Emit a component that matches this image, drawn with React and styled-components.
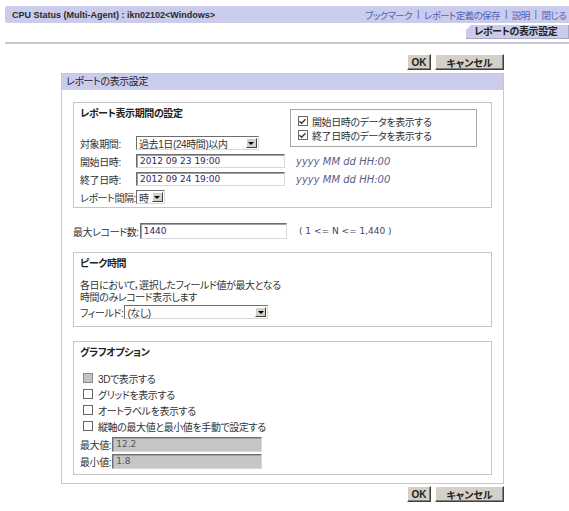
import React from 'react'
import styled, { createGlobalStyle } from 'styled-components'

const GlobalStyle = createGlobalStyle`
  html, body { margin: 0; padding: 0; background: #fff; }
  body {
    font-family: "Liberation Sans", "Noto Sans CJK JP", sans-serif;
    font-size: 10px;
    color: #333;
    letter-spacing: -0.4px;
    font-feature-settings: "palt";
  }
`

const lavender = '#cbcbec'

const Page = styled.div`
  width: 569px;
  padding-top: 6px;
`

const TopBar = styled.div`
  margin-left: 5px;
  height: 17px;
  background: ${lavender};
  border-radius: 2px 0 0 2px;
  display: flex;
  align-items: center;
  justify-content: space-between;
  padding: 0 3px 0 7px;
`
const AppTitle = styled.div`
  font-weight: bold;
  font-size: 9px;
  letter-spacing: 0;
  color: #2a2a2a;
`
const Links = styled.div`
  display: flex;
  gap: 5px;
  font-size: 9.5px;
  letter-spacing: -0.6px;
  color: #4a62b8;
`

const TabRow = styled.div`
  display: flex;
  justify-content: flex-end;
  margin: 2px 0 0 5px;
  padding-bottom: 3px;
  border-bottom: 2px solid #c6c6d6;
`
const Tab = styled.div`
  width: 95px;
  height: 14px;
  padding-left: 8px;
  background: ${lavender};
  clip-path: polygon(5px 0, 100% 0, 100% 100%, 0 100%, 0 5px);
  font-weight: bold;
  color: #222;
  line-height: 14px;
  box-shadow: inset -1px -1px 0 #a8a8c8;
`

const ButtonRow = styled.div`
  display: flex;
  justify-content: flex-end;
  gap: 4px;
  padding-right: 65px;
  margin-top: ${p => p.$top}px;
`
const Btn = styled.button`
  height: 16px;
  width: ${p => p.$w}px;
  padding: 0;
  background: #d4d0c8;
  border: 1px solid;
  border-color: #fff #404040 #404040 #fff;
  box-shadow: inset -1px -1px 0 #808080;
  font-family: "Liberation Sans", "Noto Sans CJK JP", sans-serif;
  font-size: 10px;
  font-weight: bold;
  color: #222;
  font-feature-settings: "palt";
`

const Panel = styled.div`
  margin: 3px 0 0 61px;
  width: 443px;
  box-sizing: border-box;
  border: 1px solid #c8c8c8;
`
const PanelHead = styled.div`
  height: 16px;
  line-height: 16px;
  background: ${lavender};
  padding-left: 4px;
  color: #222;
`
const PanelBody = styled.div`
  padding: 12px 11px 8px;
`

const Section = styled.div`
  border: 1px solid #c6c6c6;
  padding: 5px 6px ${p => p.$pb}px;
  margin-top: ${p => p.$mt || 0}px;
`
const SectionTitle = styled.div`
  font-weight: bold;
  line-height: 12px;
  color: #222;
  grid-column: ${p => p.$span || 'auto'};
`

const PeriodGrid = styled.div`
  display: grid;
  grid-template-columns: max-content 151px 1fr;
  grid-template-rows: 28px 18px 18px 18px 14px;
`
const Cell = styled.div`
  height: 14px;
  display: flex;
  align-items: center;
  white-space: nowrap;
`
const CheckBoxPanel = styled.div`
  grid-column: 3;
  grid-row: 1 / span 2;
  margin: 1px 8px 0 3px;
  height: 38px;
  box-sizing: border-box;
  border: 1px solid #a8a8a8;
  padding: 4px 0 0 7px;
  display: flex;
  flex-direction: column;
`
const Hint = styled(Cell)`
  padding-left: 9px;
  font-family: "DejaVu Sans", sans-serif;
  font-style: italic;
  font-size: 10px;
  letter-spacing: 0;
  color: #5c5c86;
`

const TextInput = styled.input`
  width: ${p => (p.$w ? `${p.$w}px` : 'auto')};
  flex: ${p => (p.$w ? 'none' : '1')};
  min-width: 0;
  height: ${p => p.$h || 14}px;
  box-sizing: border-box;
  margin: 0;
  padding: 0 3px;
  border: 1px solid;
  border-color: #6e6e6e #d8d8d8 #d8d8d8 #6e6e6e;
  box-shadow: inset 1px 1px 0 #a0a0a0;
  background: ${p => (p.$disabled ? '#c6c6c6' : '#fff')};
  color: ${p => (p.$disabled ? '#555' : '#2c2a5e')};
  font-family: "DejaVu Sans", sans-serif;
  font-size: 9px;
  letter-spacing: 0;
  outline: none;
`

const SelectBox = styled.div`
  width: ${p => p.$w}px;
  height: 14px;
  box-sizing: border-box;
  border: 1px solid;
  border-color: #6e6e6e #d8d8d8 #d8d8d8 #6e6e6e;
  background: #fff;
  display: flex;
  align-items: center;
`
const SelectText = styled.span`
  flex: 1;
  padding-left: 2px;
  color: #333;
  white-space: nowrap;
  overflow: hidden;
`
const SelectArrow = styled.span`
  width: 11px;
  height: 10px;
  margin-right: 1px;
  box-sizing: border-box;
  background: #d4d0c8;
  border: 1px solid;
  border-color: #fff #404040 #404040 #fff;
  display: flex;
  align-items: center;
  justify-content: center;
  &::after {
    content: '';
    border-left: 3px solid transparent;
    border-right: 3px solid transparent;
    border-top: 3px solid #000;
  }
`

const Select = ({ w, children }) => (
  <SelectBox $w={w}>
    <SelectText>{children}</SelectText>
    <SelectArrow />
  </SelectBox>
)

const CheckRow = styled.label`
  display: flex;
  align-items: center;
  height: ${p => p.$h}px;
  gap: ${p => p.$gap}px;
  padding-left: ${p => p.$indent || 0}px;
  white-space: nowrap;
`
const Box = styled.span`
  width: 8px;
  height: 8px;
  flex: none;
  border: 1px solid ${p => (p.$disabled ? '#8a8a8a' : '#666')};
  background: ${p => (p.$disabled ? '#c4c4c4' : '#fff')};
  display: flex;
  align-items: center;
  justify-content: center;
`

const Check = ({ checked, disabled }) => (
  <Box $disabled={disabled}>
    {checked && (
      <svg width="7" height="7" viewBox="0 0 7 7">
        <path d="M0.5 3.2 L2.6 5.3 L6.5 1.2" stroke="#333" strokeWidth="1.3" fill="none" />
      </svg>
    )}
  </Box>
)

const RecordRow = styled.div`
  display: flex;
  align-items: center;
  height: 16px;
  margin: 15px 0 13px;
`
const RecordField = styled.div`
  display: flex;
  align-items: center;
  width: 214px;
  gap: 1px;
  white-space: nowrap;
`
const Range = styled.span`
  margin-left: 12px;
  font-family: "DejaVu Sans", sans-serif;
  font-size: 9px;
  letter-spacing: 0;
  color: #444466;
`

const Desc = styled.div`
  margin-top: 10px;
  line-height: 12px;
`
const FieldRow = styled.div`
  display: flex;
  align-items: center;
  width: ${p => p.$w}px;
  height: ${p => p.$h || 14}px;
  margin-top: ${p => p.$mt || 0}px;
  gap: 1px;
  white-space: nowrap;
`
const CheckList = styled.div`
  margin-top: 11px;
`

export default function App() {
  return (
    <Page>
      <GlobalStyle />
      <TopBar>
        <AppTitle>CPU Status (Multi-Agent) : ikn02102&lt;Windows&gt;</AppTitle>
        <Links>
          <span>ブックマーク</span>
          <span>|</span>
          <span>レポート定義の保存</span>
          <span>|</span>
          <span>説明</span>
          <span>|</span>
          <span>閉じる</span>
        </Links>
      </TopBar>
      <TabRow>
        <Tab>レポートの表示設定</Tab>
      </TabRow>

      <ButtonRow $top={10}>
        <Btn $w={24}>OK</Btn>
        <Btn $w={69}>キャンセル</Btn>
      </ButtonRow>

      <Panel>
        <PanelHead>レポートの表示設定</PanelHead>
        <PanelBody>
          <Section $pb={3}>
            <PeriodGrid>
              <SectionTitle $span="1 / span 2">レポート表示期間の設定</SectionTitle>
              <CheckBoxPanel>
                <CheckRow $h={14} $gap={4}>
                  <Check checked />
                  開始日時のデータを表示する
                </CheckRow>
                <CheckRow $h={14} $gap={4}>
                  <Check checked />
                  終了日時のデータを表示する
                </CheckRow>
              </CheckBoxPanel>

              <Cell>対象期間:</Cell>
              <Cell><Select w={123}>過去1日(24時間)以内</Select></Cell>

              <Cell>開始日時:</Cell>
              <Cell><TextInput $w={149} readOnly value="2012 09 23 19:00" /></Cell>
              <Hint>yyyy MM dd HH:00</Hint>

              <Cell>終了日時:</Cell>
              <Cell><TextInput $w={149} readOnly value="2012 09 24 19:00" /></Cell>
              <Hint>yyyy MM dd HH:00</Hint>

              <Cell>レポート間隔:</Cell>
              <Cell><Select w={29}>時</Select></Cell>
            </PeriodGrid>
          </Section>

          <RecordRow>
            <RecordField>
              最大レコード数:
              <TextInput $h={16} readOnly value="1440" />
            </RecordField>
            <Range>( 1 &lt;= N &lt;= 1,440 )</Range>
          </RecordRow>

          <Section $pb={7}>
            <SectionTitle>ピーク時間</SectionTitle>
            <Desc>
              各日において，選択したフィールド値が最大となる
              <br />
              時間のみレコード表示します
            </Desc>
            <FieldRow $mt={1}>
              フィールド:
              <Select w={144}>(なし)</Select>
            </FieldRow>
          </Section>

          <Section $mt={14} $pb={5}>
            <SectionTitle>グラフオプション</SectionTitle>
            <CheckList>
              <CheckRow $h={16} $gap={5} $indent={3}>
                <Check disabled />
                3Dで表示する
              </CheckRow>
              <CheckRow $h={16} $gap={5} $indent={3}>
                <Check />
                グリッドを表示する
              </CheckRow>
              <CheckRow $h={16} $gap={5} $indent={3}>
                <Check />
                オートラベルを表示する
              </CheckRow>
              <CheckRow $h={16} $gap={5} $indent={3}>
                <Check />
                縦軸の最大値と最小値を手動で設定する
              </CheckRow>
            </CheckList>
            <FieldRow $w={182} $h={16} $mt={2}>
              最大値:
              <TextInput $h={15} $disabled readOnly value="12.2" />
            </FieldRow>
            <FieldRow $w={182} $h={16} $mt={1}>
              最小値:
              <TextInput $h={15} $disabled readOnly value="1.8" />
            </FieldRow>
          </Section>
        </PanelBody>
      </Panel>

      <ButtonRow $top={2}>
        <Btn $w={24}>OK</Btn>
        <Btn $w={69}>キャンセル</Btn>
      </ButtonRow>
    </Page>
  )
}
